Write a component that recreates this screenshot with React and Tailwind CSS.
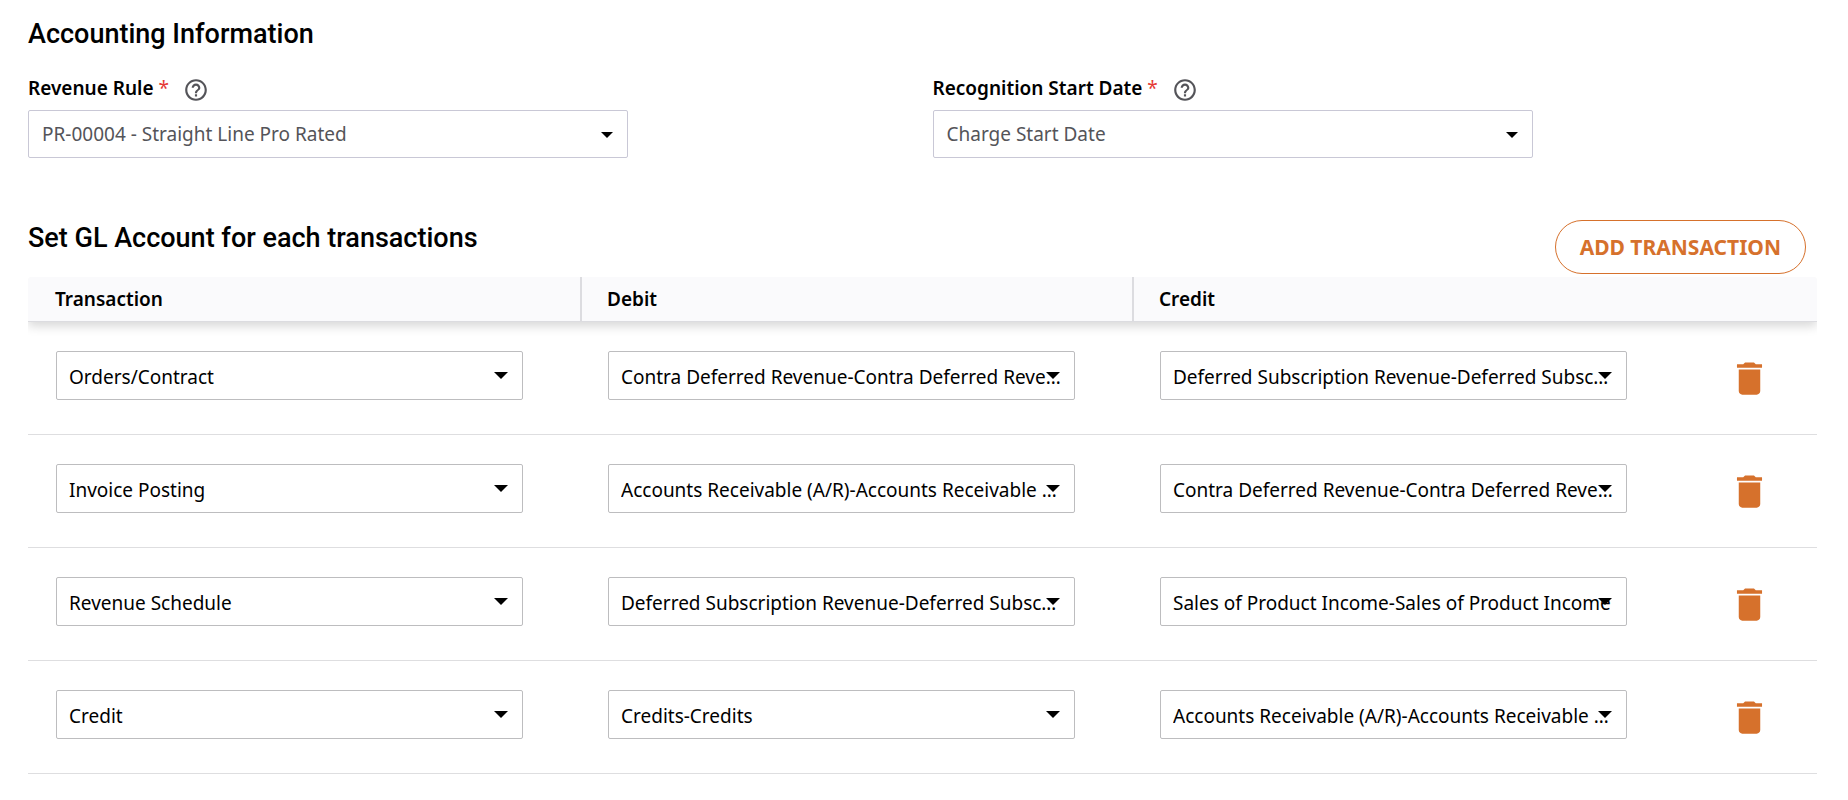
import React from "react";
import { MdDelete, MdHelpOutline } from "react-icons/md";

const ruleFields = [
  { id: "revenue-rule", label: "Revenue Rule", value: "PR-00004 - Straight Line Pro Rated" },
  { id: "recognition-start", label: "Recognition Start Date", value: "Charge Start Date" },
];

const accounts = {
  contra: "Contra Deferred Revenue-Contra Deferred Revenue",
  deferred: "Deferred Subscription Revenue-Deferred Subscription Revenue",
  receivable: "Accounts Receivable (A/R)-Accounts Receivable (A/R)",
  sales: "Sales of Product Income-Sales of Product Income",
  credits: "Credits-Credits",
};

const transactions = [
  { name: "Orders/Contract", debit: accounts.contra, credit: accounts.deferred },
  { name: "Invoice Posting", debit: accounts.receivable, credit: accounts.contra },
  { name: "Revenue Schedule", debit: accounts.deferred, credit: accounts.sales },
  { name: "Credit", debit: accounts.credits, credit: accounts.receivable },
];

const transactionNames = transactions.map((t) => t.name);
const accountNames = Object.values(accounts);

function RuleField({ id, label, value }) {
  return (
    <div>
      <div className="flex items-center h-7 mb-2">
        <label htmlFor={id} className="font-semibold">
          {label} <span className="font-normal text-[#e53935]">*</span>
        </label>
        <button type="button" aria-label={`About ${label}`} className="ml-[14px] mt-1 text-[#545459]">
          <MdHelpOutline className="w-[26px] h-[26px]" />
        </button>
      </div>
      <div className="relative max-w-[600px]">
        <select
          id={id}
          defaultValue={value}
          className="appearance-none block w-full h-12 px-[13px] bg-white border border-[#c9c8d6] rounded-xs text-[#545459]"
        >
          <option>{value}</option>
        </select>
        <svg viewBox="0 0 12 6" className="absolute right-[15px] top-[22px] w-3 h-[6px] pointer-events-none">
          <path d="M0 0h12L6 6z" />
        </svg>
      </div>
    </div>
  );
}

function CellSelect({ label, value, options }) {
  return (
    <div className="relative">
      <select
        aria-label={label}
        defaultValue={value}
        className="appearance-none block w-full h-[49px] px-3 pt-0.5 bg-white border border-[#bdbdbf] rounded-xs text-ellipsis"
      >
        {options.map((o) => (
          <option key={o}>{o}</option>
        ))}
      </select>
      <svg viewBox="0 0 14 7" className="absolute right-[15px] top-[21px] w-[14px] h-[7px] pointer-events-none">
        <path d="M0 0h14L7 7z" />
      </svg>
    </div>
  );
}

export default function App() {
  return (
    <main className="min-h-screen bg-white pt-4 pl-7 pr-[31px] text-[19px] leading-6 text-black font-['Noto_Sans',sans-serif]">
      <h2 className="font-['Roboto',sans-serif] font-medium text-[27px] leading-9">Accounting Information</h2>

      <div className="grid grid-cols-2 gap-5 mt-[22px]">
        {ruleFields.map((f) => (
          <RuleField key={f.id} {...f} />
        ))}
      </div>

      {/* GL accounts */}
      <div className="flex items-start justify-between mt-[62px] pr-[11px]">
        <h2 className="font-['Roboto',sans-serif] font-medium text-[27px] leading-9">
          Set GL Account for each transactions
        </h2>
        <button
          type="button"
          className="h-[54px] px-6 border border-[#d6712c] rounded-full text-[21px] font-bold text-[#d6712c] uppercase"
        >
          Add Transaction
        </button>
      </div>

      {/* the clip keeps the header shadow inside the table's sides */}
      <table className="w-full table-fixed border-separate border-spacing-0 mt-[3px] text-left [clip-path:inset(0_round_4px_4px_0_0)]">
        <colgroup>
          <col />
          <col />
          <col />
          <col className="w-[133px]" />
        </colgroup>
        <thead className="bg-[#fafafc] shadow-[0_4px_10px_rgba(0,0,0,0.16)]">
          <tr className="h-[45px] *:border-b *:border-[#dcdce0]">
            <th className="pl-[27px] font-semibold">Transaction</th>
            <th className="pl-[25px] font-semibold border-l-2">Debit</th>
            <th className="pl-[25px] font-semibold border-l-2">Credit</th>
            <td />
          </tr>
        </thead>
        <tbody>
          {transactions.map((t) => (
            <tr key={t.name} className="*:border-b *:border-[#dedee0]">
              <td className="pt-[29px] pb-[34px] pl-7 pr-[57px]">
                <CellSelect label={`${t.name} transaction`} value={t.name} options={transactionNames} />
              </td>
              <td className="pt-[29px] pb-[34px] pl-7 pr-[57px]">
                <CellSelect label={`${t.name} debit account`} value={t.debit} options={accountNames} />
              </td>
              <td className="pt-[29px] pb-[34px] pl-7 pr-[57px]">
                <CellSelect label={`${t.name} credit account`} value={t.credit} options={accountNames} />
              </td>
              <td className="pr-0.5">
                <button type="button" aria-label={`Delete ${t.name}`} className="block mx-auto text-[#d6712c]">
                  <MdDelete className="w-[43px] h-[43px]" />
                </button>
              </td>
            </tr>
          ))}
        </tbody>
      </table>
    </main>
  );
}
